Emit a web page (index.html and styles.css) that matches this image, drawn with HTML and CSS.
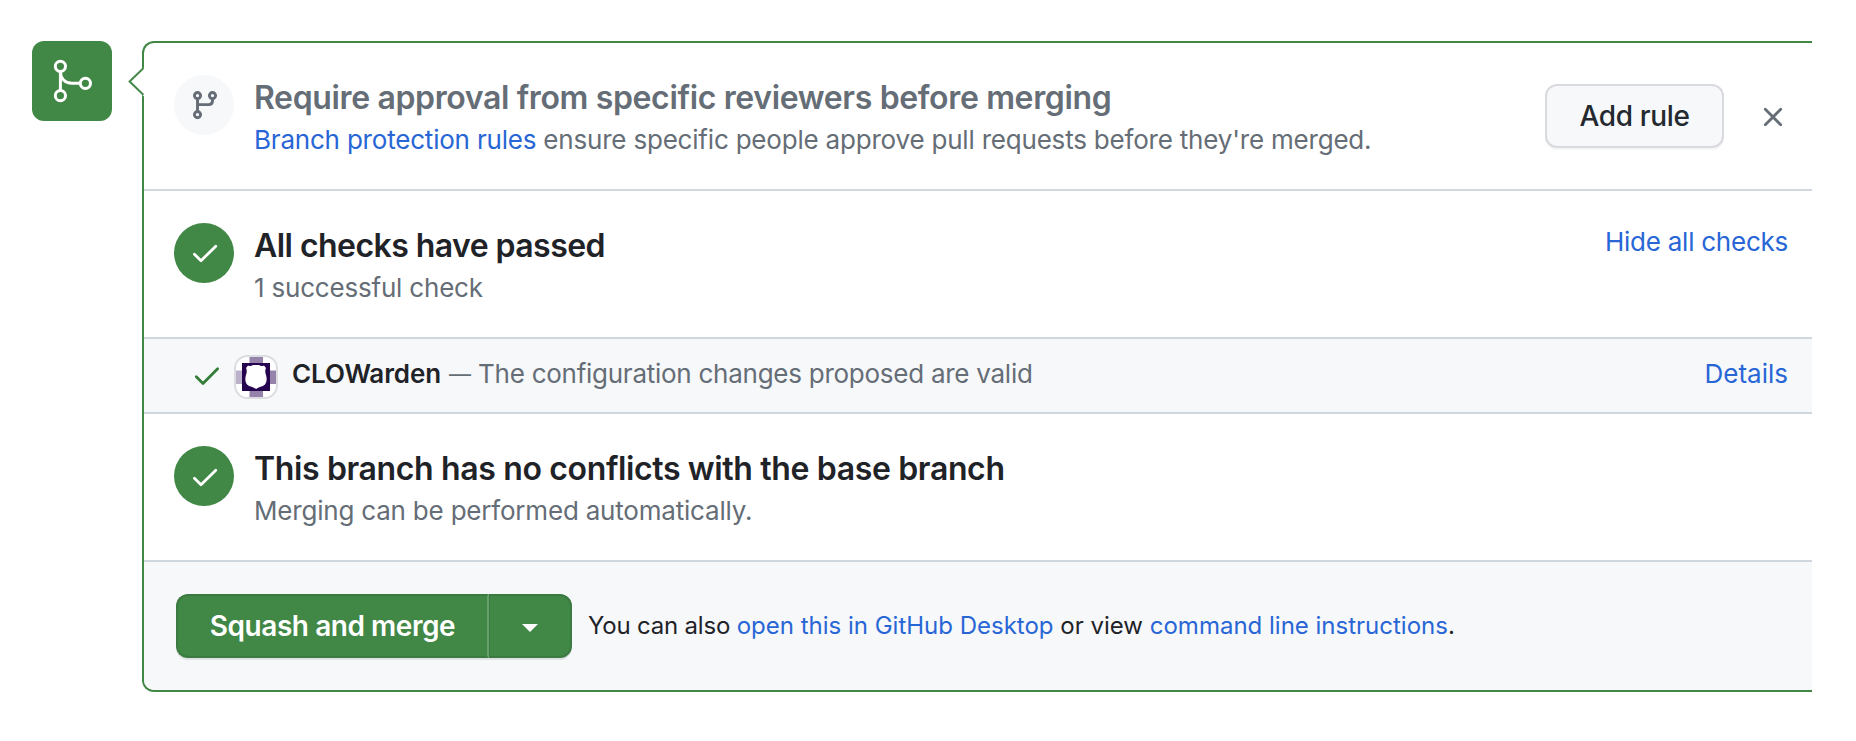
FILE: index.html
```html
<!DOCTYPE html>
<html lang="en">
<head>
<meta charset="utf-8">
<title>Merge status</title>
<link rel="stylesheet" href="styles.css">
</head>
<body>
<main class="page">
  <div class="badge">
    <svg width="80" height="80" viewBox="0 0 80 80" fill="none" stroke="#fff" stroke-width="3">
      <circle cx="28.4" cy="25.3" r="5.1"/>
      <circle cx="28.4" cy="54.7" r="5.1"/>
      <circle cx="53.4" cy="42.3" r="5.1"/>
      <path d="M28.4 30.4v19.200M28.4 31c0 6.300 4.600 11.300 11.400 11.300h8.500"/>
    </svg>
  </div>

  <section class="box">
    <svg class="arrow" width="16" height="30" viewBox="0 0 16 30">
      <path d="M16 0.6L1.4 15L16 29.4z" fill="#fff"/>
      <path d="M15.4 1.200L1.600 14.500L15.400 27.800" fill="none" stroke="#418745" stroke-width="2"/>
    </svg>

    <div class="item">
      <div class="dot dot-muted">
        <svg width="60" height="60" viewBox="0 0 60 60" fill="none" stroke="#656d76" stroke-width="2.9">
          <circle cx="23.5" cy="20.6" r="3.1"/>
          <circle cx="38.5" cy="20.6" r="3.1"/>
          <circle cx="23.5" cy="39.6" r="3.1"/>
          <path d="M23.5 23.6v13M23.5 29.6h11.2c2.3 0 3.8-1.5 3.8-3.8v-2.2"/>
        </svg>
      </div>
      <div class="text">
        <h3 class="title title-muted">Require approval from specific reviewers before merging</h3>
        <p class="sub"><a class="link">Branch protection rules</a> ensure specific people approve pull requests before they're merged.</p>
      </div>
      <button class="btn">Add rule</button>
      <svg class="close" width="20" height="20" viewBox="0 0 20 20" fill="none" stroke="#656d76" stroke-width="2.8" stroke-linecap="round">
        <path d="M2.3 2.3L17.7 17.7M17.7 2.3L2.3 17.7"/>
      </svg>
    </div>

    <div class="item">
      <div class="dot">
        <svg width="60" height="60" viewBox="0 0 60 60" fill="none" stroke="#fff" stroke-width="2.8" stroke-linecap="round" stroke-linejoin="round">
          <path d="M20.4 31.2L27 37.7L41.8 23.2"/>
        </svg>
      </div>
      <div class="text">
        <h3 class="title title-tight">All checks have passed</h3>
        <p class="sub">1 successful check</p>
      </div>
      <a class="link toggle">Hide all checks</a>
    </div>

    <div class="check">
      <svg class="tick" width="28" height="22" viewBox="0 0 28 22" fill="none" stroke="#347d39" stroke-width="2.8" stroke-linecap="round" stroke-linejoin="round">
        <path d="M4.3 10.8L11 17.4L25.6 2.8"/>
      </svg>
      <svg class="avatar" width="44" height="44" viewBox="0 0 44 44">
        <rect x="1" y="1" width="42" height="42" rx="12.5" fill="#fff"/>
        <path d="M15.5 2H29v6H15.5zM15.5 36H29v6H15.5z" fill="#9683ab"/>
        <path d="M36 15.5h6V29h-6z" fill="#9683ab"/>
        <path d="M2 15.5h6V29H2z" fill="#bcb1cb"/>
        <path d="M8 8h28v28H8z" fill="#26034f"/>
        <path d="M14 10.500C16 11.500 17.500 11 19 10H25C26.500 11 28 11.500 30 10.500L32 13C31 15 31 17 32 20C33 23 33 27 31 29.500C28.500 32 24.500 31.800 22 34C19.500 31.800 15.500 32 13 29.500C11 27 11 23 12 20C13 17 13 15 12 13z" fill="#fff"/>
        <rect x="1" y="1" width="42" height="42" rx="12.5" fill="none" stroke="#dcdde0" stroke-width="2"/>
      </svg>
      <strong class="name">CLOWarden</strong>
      <span class="dash">—</span>
      <span class="desc">The configuration changes proposed are valid</span>
      <a class="link details">Details</a>
    </div>

    <div class="item">
      <div class="dot">
        <svg width="60" height="60" viewBox="0 0 60 60" fill="none" stroke="#fff" stroke-width="2.8" stroke-linecap="round" stroke-linejoin="round">
          <path d="M20.4 32.2L27 38.7L41.8 24.2"/>
        </svg>
      </div>
      <div class="text">
        <h3 class="title">This branch has no conflicts with the base branch</h3>
        <p class="sub">Merging can be performed automatically.</p>
      </div>
    </div>

    <div class="footer">
      <div class="group">
        <button class="btn primary main">Squash and merge</button>
        <button class="btn primary more" aria-label="Select merge method">
          <svg width="16" height="8" viewBox="0 0 16 8"><path d="M0 0h16L8 8z" fill="#fff"/></svg>
        </button>
      </div>
      <p class="alt"><span class="lead">You can also </span><a class="link">open this in GitHub Desktop</a> or view <a class="link">command line instructions</a>.</p>
    </div>
  </section>
</main>
</body>
</html>
```
FILE: styles.css
```css
* { box-sizing: border-box; }

body {
  margin: 0;
  background: #fff;
  color: #1f2328;
  font-family: Inter, "Liberation Sans", sans-serif;
}

h3, p { margin: 0; }
svg { display: block; flex: none; }

.page {
  display: flex;
  align-items: flex-start;
  gap: 30px;
  height: 741px;
  padding: 41px 44px 0 32px;
}

.badge {
  flex: none;
  width: 80px;
  height: 80px;
  border-radius: 12px;
  background: #418745;
}

.box {
  position: relative;
  flex: 1;
  border: 2px solid #418745;
  border-right: 0;
  border-radius: 12px 0 0 12px;
}

.arrow {
  position: absolute;
  left: -16px;
  top: 23.5px;
}

.item {
  display: flex;
  align-items: flex-start;
  height: 148px;
  padding: 32px 24px 0 30px;
  border-bottom: 2px solid #d0d7de;
}

.dot {
  flex: none;
  width: 60px;
  height: 60px;
  margin-right: 20px;
  border-radius: 50%;
  background: #418745;
}

.dot-muted { background: #f6f8fa; }

.text {
  flex: 1;
  padding-top: 3px;
  white-space: nowrap;
}

.title {
  font-size: 32px;
  font-weight: 600;
  line-height: 40px;
  letter-spacing: -0.36px;
}

.title-muted { color: #656d76; }
.title-tight { letter-spacing: -0.55px; }

.sub {
  margin-top: 2px;
  font-size: 26px;
  line-height: 40px;
  letter-spacing: -0.2px;
  color: #656d76;
}

.link { color: #2866d6; }

.toggle {
  font-size: 26px;
  line-height: 38px;
  letter-spacing: -0.25px;
}

.btn {
  height: 64px;
  margin: 0;
  padding: 0;
  border: 2px solid #d8dade;
  border-radius: 12px;
  background: #f6f8fa;
  box-shadow: 0 2px 0 rgba(31, 35, 40, 0.04);
  color: #24292f;
  font: 500 28px/60px Inter, "Liberation Sans", sans-serif;
  letter-spacing: -0.35px;
}

.item .btn {
  width: 179px;
  margin-top: 9px;
}

.close { margin: 32px 5px 0 39px; }

.check {
  display: flex;
  align-items: center;
  height: 75px;
  padding: 0 24px 0 48px;
  border-bottom: 2px solid #d0d7de;
  background: #f6f8fa;
  color: #656d76;
  font-size: 26px;
  line-height: 40px;
  white-space: nowrap;
}

.tick { margin-top: 2px; }
.avatar { margin: 3px 14px 0 14px; }

.name, .dash, .desc, .details { margin-top: -3px; }

.name {
  color: #1f2328;
  font-weight: 600;
  letter-spacing: -0.1px;
}

.dash {
  width: 22px;
  margin-left: 8px;
  font-size: 22px;
}

.desc { margin-left: 7px; letter-spacing: -0.26px; }
.details { margin-left: auto; }

.footer {
  display: flex;
  align-items: center;
  height: 128px;
  padding-left: 32px;
  border-radius: 0 0 0 10px;
  background: #f6f8fa;
}

.group { display: flex; }

.primary {
  border-color: #3b7a40;
  background: #418745;
  color: #fff;
  font-weight: 600;
  letter-spacing: -0.45px;
  box-shadow: 0 2px 0 rgba(31, 35, 40, 0.1);
}

.main {
  width: 313px;
  border-right: 2px solid #65a069;
  border-radius: 12px 0 0 12px;
}

.more {
  display: flex;
  align-items: center;
  justify-content: center;
  width: 83px;
  border-left-width: 1px;
  border-radius: 0 12px 12px 0;
}

.more svg { margin-top: 4px; }

.alt {
  margin-left: 16px;
  font-size: 24px;
  line-height: 36px;
  white-space: nowrap;
}

.lead { letter-spacing: -0.2px; }
```
